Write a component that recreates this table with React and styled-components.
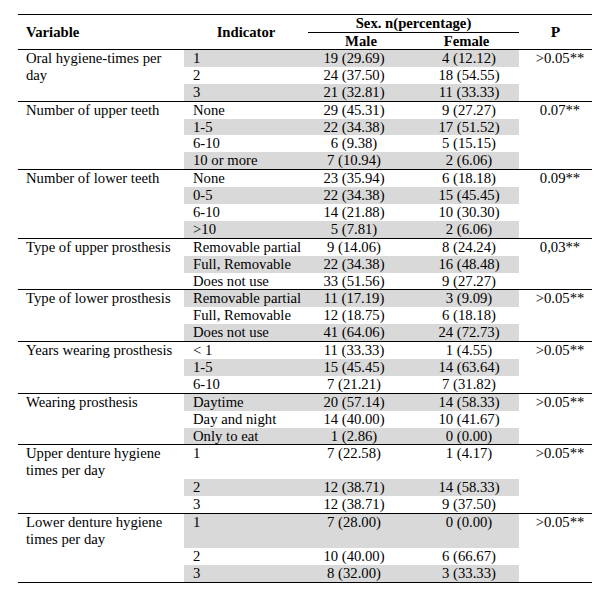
import React from "react";
import styled, { createGlobalStyle } from "styled-components";

const FONT = `"Liberation Serif", "Times New Roman", Tinos, Times, serif`;

const Global = createGlobalStyle`
  html, body { margin: 0; padding: 0; background: #fff; }
  body { font-family: ${FONT}; color: #000; }
`;

const ROW_H = 16.9;
const GRAY = "#d9d9d9";

const Page = styled.div`
  padding: 14px 18px 0 18px;
  width: 574px;
  font-family: ${FONT};
  font-size: 14.7px;
  line-height: ${ROW_H}px;
  color: #000;
`;

const Table = styled.div`
  width: 574px;
  border-top: 1px solid #000;
`;

const Header = styled.div`
  display: grid;
  grid-template-columns: 166px 124px 106px 105px 73px;
  grid-template-rows: 18px 16px;
  border-bottom: 1px solid #000;
  font-weight: bold;
`;

const HeadCell = styled.div`
  grid-row: ${(p) => p.$row || "1 / 3"};
  grid-column: ${(p) => p.$col};
  align-self: ${(p) => (p.$row ? "stretch" : "center")};
  text-align: ${(p) => p.$align || "center"};
  padding-left: ${(p) => p.$pl || 0}px;
  font-size: ${(p) => p.$fs || 14.7}px;
  line-height: ${ROW_H}px;
  box-sizing: border-box;
  ${(p) => (p.$underline ? "border-bottom: 1px solid #000;" : "")}
`;

const Group = styled.div`
  display: flex;
  border-bottom: 1px solid #000;
`;

const VariableCell = styled.div`
  width: 166px;
  box-sizing: border-box;
  padding-left: 8px;
  flex-shrink: 0;
`;

const Rows = styled.div`
  display: flex;
  flex-direction: column;
  width: 335px;
  flex-shrink: 0;
`;

const Row = styled.div`
  display: grid;
  grid-template-columns: 124px 106px 105px;
  height: ${(p) => (p.$tall ? ROW_H * 2 : ROW_H)}px;
  background: ${(p) => (p.$shaded ? GRAY : "transparent")};
  white-space: nowrap;
`;

const Indicator = styled.div`
  padding-left: 9px;
`;

const Value = styled.div`
  text-align: center;
  padding-left: ${(p) => p.$pl || 0}px;
  padding-right: ${(p) => p.$pr || 0}px;
`;

const PCell = styled.div`
  width: 73px;
  flex-shrink: 0;
  text-align: center;
  padding-left: 9px;
  box-sizing: border-box;
  white-space: nowrap;
`;

const data = [
  { v: "Oral hygiene-times per day", p: ">0.05**", rows: [["1", "19 (29.69)", "4 (12.12)"], ["2", "24 (37.50)", "18 (54.55)"], ["3", "21 (32.81)", "11 (33.33)"]] },
  { v: "Number of upper teeth", p: "0.07**", rows: [["None", "29 (45.31)", "9 (27.27)"], ["1-5", "22 (34.38)", "17 (51.52)"], ["6-10", "6 (9.38)", "5 (15.15)"], ["10 or more", "7 (10.94)", "2 (6.06)"]] },
  { v: "Number of lower teeth", p: "0.09**", rows: [["None", "23 (35.94)", "6 (18.18)"], ["0-5", "22 (34.38)", "15 (45.45)"], ["6-10", "14 (21.88)", "10 (30.30)"], [">10", "5 (7.81)", "2 (6.06)"]] },
  { v: "Type of upper prosthesis", p: "0,03**", rows: [["Removable partial", "9 (14.06)", "8 (24.24)"], ["Full, Removable", "22 (34.38)", "16 (48.48)"], ["Does not use", "33 (51.56)", "9 (27.27)"]] },
  { v: "Type of lower prosthesis", p: ">0.05**", rows: [["Removable partial", "11 (17.19)", "3 (9.09)"], ["Full, Removable", "12 (18.75)", "6 (18.18)"], ["Does not use", "41 (64.06)", "24 (72.73)"]] },
  { v: "Years wearing prosthesis", p: ">0.05**", rows: [["< 1", "11 (33.33)", "1 (4.55)"], ["1-5", "15 (45.45)", "14 (63.64)"], ["6-10", "7 (21.21)", "7 (31.82)"]] },
  { v: "Wearing prosthesis", p: ">0.05**", rows: [["Daytime", "20 (57.14)", "14 (58.33)"], ["Day and night", "14 (40.00)", "10 (41.67)"], ["Only to eat", "1 (2.86)", "0 (0.00)"]] },
  { v: "Upper denture hygiene times per day", p: ">0.05**", tall: true, rows: [["1", "7 (22.58)", "1 (4.17)"], ["2", "12 (38.71)", "14 (58.33)"], ["3", "12 (38.71)", "9 (37.50)"]] },
  { v: "Lower denture hygiene times per day", p: ">0.05**", tall: true, rows: [["1", "7 (28.00)", "0 (0.00)"], ["2", "10 (40.00)", "6 (66.67)"], ["3", "8 (32.00)", "3 (33.33)"]] },
];

export default function App() {
  let idx = 0;
  return (
    <Page>
      <Global />
      <Table>
        <Header>
          <HeadCell $col="1" $align="left" $pl={8}>Variable</HeadCell>
          <HeadCell $col="2">Indicator</HeadCell>
          <HeadCell $col="3 / 5" $row="1" $underline>Sex. n(percentage)</HeadCell>
          <HeadCell $col="3" $row="2">Male</HeadCell>
          <HeadCell $col="4" $row="2">Female</HeadCell>
          <HeadCell $col="5" $fs={15.5}>P</HeadCell>
        </Header>
        {data.map((g, gi) => (
          <Group key={gi}>
            <VariableCell>{g.v}</VariableCell>
            <Rows>
              {g.rows.map((r, ri) => {
                const shaded = idx % 2 === 0;
                idx += 1;
                return (
                  <Row key={ri} $shaded={shaded} $tall={g.tall && ri === 0}>
                    <Indicator>{r[0]}</Indicator>
                    <Value $pr={14}>{r[1]}</Value>
                    <Value $pl={5}>{r[2]}</Value>
                  </Row>
                );
              })}
            </Rows>
            <PCell>{g.p}</PCell>
          </Group>
        ))}
      </Table>
    </Page>
  );
}
